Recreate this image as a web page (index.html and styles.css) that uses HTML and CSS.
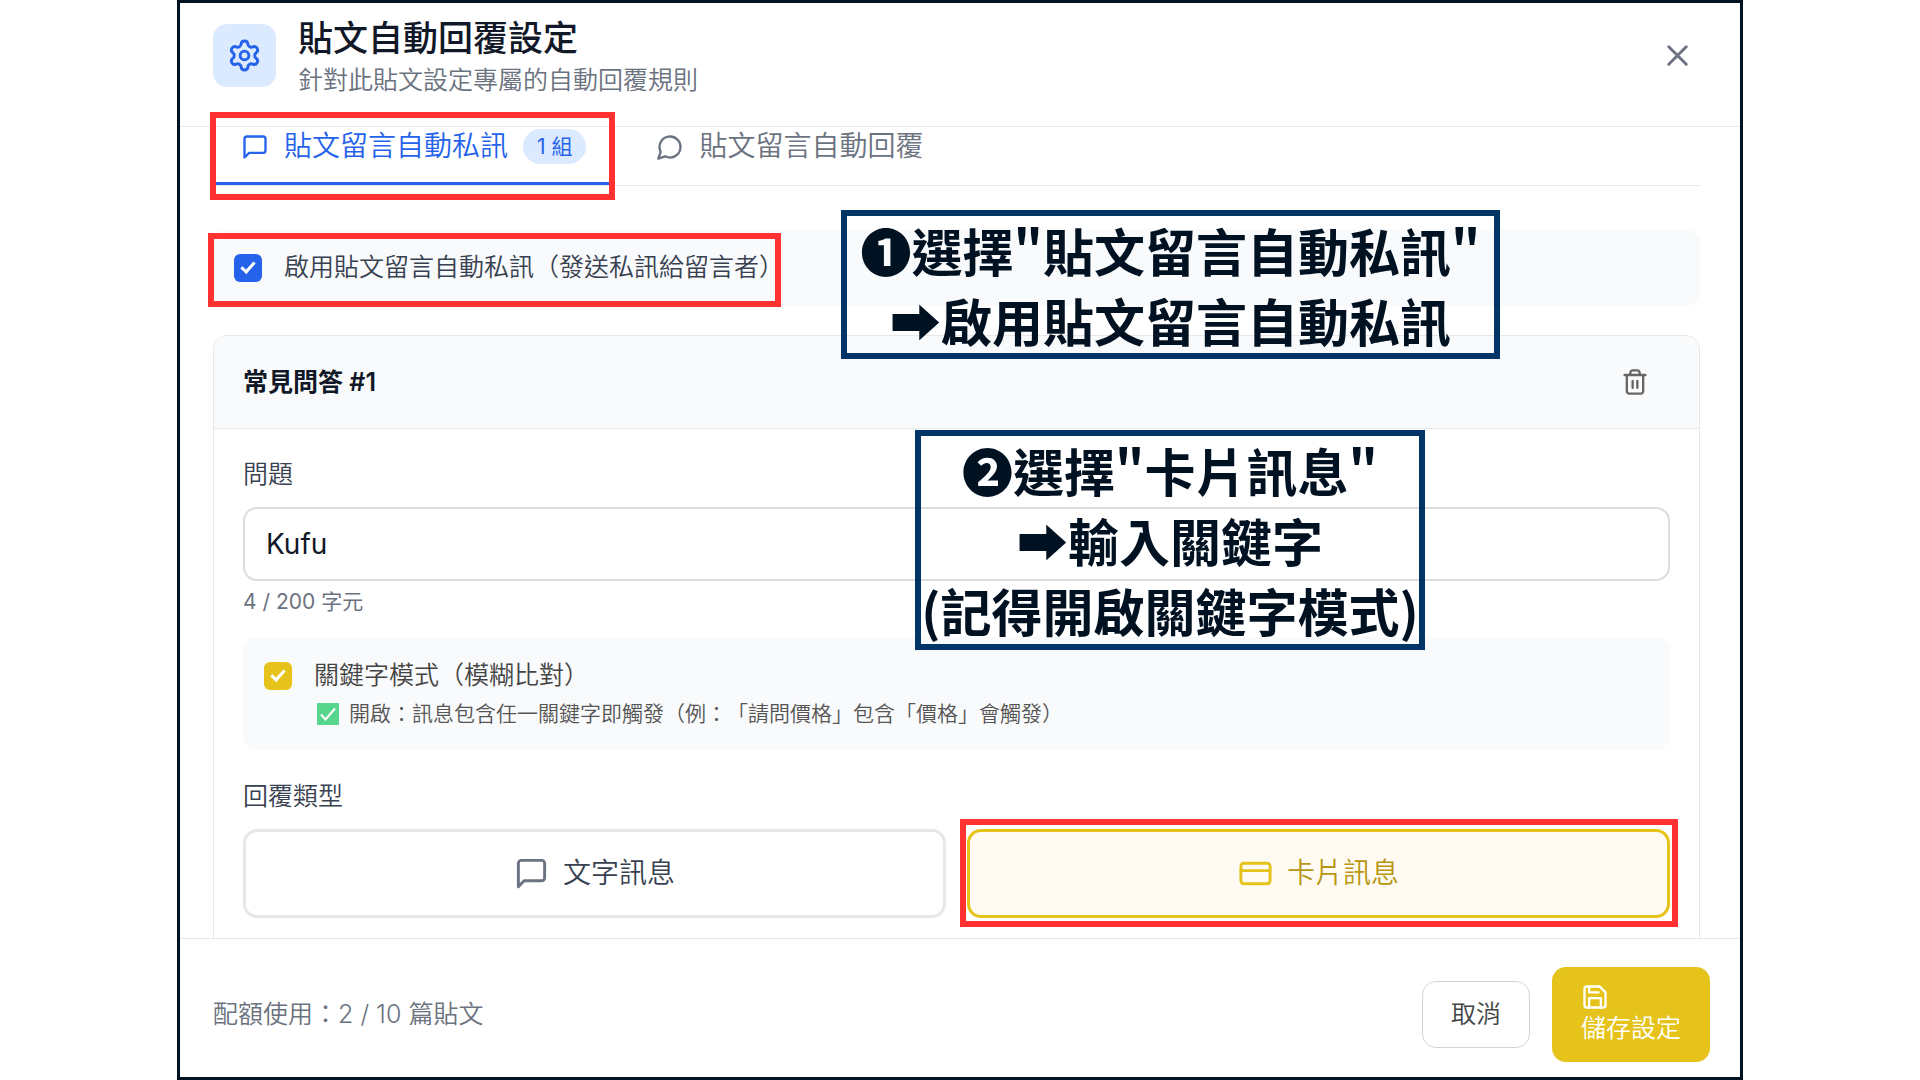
FILE: index.html
```html
<!DOCTYPE html>
<html lang="zh-TW">
<head>
  <meta charset="UTF-8" />
  <meta name="viewport" content="width=device-width, initial-scale=1.0"/>
  <title>貼文自動回覆設定</title>
  <link rel="stylesheet" href="styles.css">
</head>
<body>

  <div class="modal">

    <!-- Header -->
    <header class="modal-header">
      <div class="header-icon">
        <svg class="icon icon-lg" viewBox="0 0 24 24"><path d="M9.671 4.136a2.34 2.34 0 0 1 4.659 0 2.34 2.34 0 0 0 3.319 1.915 2.34 2.34 0 0 1 2.33 4.033 2.34 2.34 0 0 0 0 3.831 2.34 2.34 0 0 1-2.33 4.033 2.34 2.34 0 0 0-3.319 1.915 2.34 2.34 0 0 1-4.659 0 2.34 2.34 0 0 0-3.32-1.915 2.34 2.34 0 0 1-2.33-4.033 2.34 2.34 0 0 0 0-3.831A2.34 2.34 0 0 1 6.35 6.051a2.34 2.34 0 0 0 3.319-1.915"/><circle cx="12" cy="12" r="3"/></svg>
      </div>
      <div class="header-text">
        <h1>貼文自動回覆設定</h1>
        <p>針對此貼文設定專屬的自動回覆規則</p>
      </div>
      <button type="button" class="close-btn" aria-label="關閉">
        <svg class="icon icon-lg" viewBox="0 0 24 24"><path d="M18 6 6 18M6 6l12 12"/></svg>
      </button>
    </header>

    <!-- Scrollable content -->
    <main class="modal-body">
      <div class="tabs">
        <button type="button" class="tab active">
          <svg class="icon" viewBox="0 0 24 24"><path d="M21 15a2 2 0 0 1-2 2H7l-4 4V5a2 2 0 0 1 2-2h14a2 2 0 0 1 2 2z"/></svg>
          貼文留言自動私訊
          <span class="badge">1 組</span>
        </button>
        <button type="button" class="tab">
          <svg class="icon" viewBox="0 0 24 24"><path d="M7.9 20A9 9 0 1 0 4 16.1L2 22Z"/></svg>
          貼文留言自動回覆
        </button>
      </div>

      <label class="enable-row">
        <input type="checkbox" class="check blue" checked />
        啟用貼文留言自動私訊（發送私訊給留言者）
      </label>

      <section class="card">
        <div class="card-header">
          <h2>常見問答 #1</h2>
          <button type="button" class="delete-btn" aria-label="刪除">
            <svg class="icon" viewBox="0 0 24 24"><path d="M3 6h18M19 6v14c0 1-1 2-2 2H7c-1 0-2-1-2-2V6M8 6V4c0-1 1-2 2-2h4c1 0 2 1 2 2v2M10 11v6M14 11v6"/></svg>
          </button>
        </div>

        <div class="card-content">
          <label class="field-label" for="question">問題</label>
          <input type="text" id="question" class="text-input" value="Kufu" maxlength="200" />
          <p class="counter">4 / 200 字元</p>

          <div class="keyword-box">
            <input type="checkbox" id="keywordMode" class="check yellow" checked />
            <div>
              <label for="keywordMode">關鍵字模式（模糊比對）</label>
              <p class="hint">
                <svg class="hint-icon" viewBox="0 0 22 22"><rect width="22" height="22" rx="1" fill="#57d68d"/><path d="M4 11.500l4.500 5L18 5.500" fill="none" stroke="#fff" stroke-width="2"/></svg>
                開啟：訊息包含任一關鍵字即觸發（例：「請問價格」包含「價格」會觸發）
              </p>
            </div>
          </div>

          <p class="field-label">回覆類型</p>
          <div class="type-options">
            <button type="button" class="type-btn">
              <svg class="icon icon-lg" viewBox="0 0 24 24"><path d="M21 15a2 2 0 0 1-2 2H7l-4 4V5a2 2 0 0 1 2-2h14a2 2 0 0 1 2 2z"/></svg>
              文字訊息
            </button>
            <button type="button" class="type-btn selected">
              <svg class="icon icon-lg" viewBox="0 0 24 24"><rect x="2" y="5" width="20" height="14" rx="2"/><path d="M2 10h20"/></svg>
              卡片訊息
            </button>
          </div>
        </div>
      </section>
    </main>

    <!-- Footer -->
    <footer class="modal-footer">
      <p>配額使用：2 / 10 篇貼文</p>
      <button type="button" class="cancel-btn">取消</button>
      <button type="button" class="save-btn">
        <svg class="icon" viewBox="0 0 24 24"><path d="M19 21H5a2 2 0 0 1-2-2V5a2 2 0 0 1 2-2h11l5 5v11a2 2 0 0 1-2 2z"/><path d="M17 21v-8H7v8M7 3v5h8"/></svg>
        儲存設定
      </button>
    </footer>

    <!-- Tutorial notes on top of the dialog -->
    <div class="highlight highlight-tab"></div>
    <div class="highlight highlight-enable"></div>
    <div class="highlight highlight-card"></div>

    <div class="note note-one">
      <p>❶選擇"貼文留言自動私訊"</p>
      <p>➡啟用貼文留言自動私訊</p>
    </div>
    <div class="note note-two">
      <p>❷選擇"卡片訊息"</p>
      <p>➡輸入關鍵字</p>
      <p>(記得開啟關鍵字模式)</p>
    </div>
  </div>

</body>
</html>
```

FILE: styles.css
```css
* {
  margin: 0;
  padding: 0;
  box-sizing: border-box;
}

body {
  background-color: #fff;
  padding: 0 177px;
  font-family: Inter, "Noto Sans CJK TC", sans-serif;
  font-size: 25px;
  line-height: 35px;
  font-weight: 350;
  text-spacing-trim: space-all;
  color: #374151;
}

button,
input {
  font: inherit;
  color: inherit;
}

button {
  background: none;
  border: none;
  cursor: pointer;
}

.icon {
  width: 28px;
  height: 28px;
  flex-shrink: 0;
  fill: none;
  stroke: currentColor;
  stroke-width: 2;
  stroke-linecap: round;
  stroke-linejoin: round;
}

.icon-lg {
  width: 35px;
  height: 35px;
}

.modal {
  position: relative;
  display: flex;
  flex-direction: column;
  height: 100vh;
  border: 3px solid #001122;
}

/* Header */
.modal-header {
  display: flex;
  align-items: center;
  gap: 22px;
  padding: 10px 45px 28px 33px;
  border-bottom: 1px solid #e5e7eb;
}

.header-icon {
  display: flex;
  align-items: center;
  justify-content: center;
  width: 63px;
  height: 63px;
  border-radius: 14px;
  background-color: #dbeafe;
  color: #2563eb;
}

.header-text {
  flex: 1;
}

.header-text h1 {
  font-size: 35px;
  line-height: 50px;
  font-weight: 500;
  color: #111827;
}

.header-text p {
  color: #6b7280;
}

.close-btn {
  display: flex;
  color: #6b7280;
}

/* Body */
.modal-body {
  flex: 1;
  min-height: 0;
  overflow: hidden;
  padding: 0 40px 0 33px;
}

.tabs {
  display: flex;
  gap: 14px;
  border-bottom: 1px solid #e5e7eb;
}

.tab {
  display: flex;
  align-items: center;
  gap: 15px;
  padding: 2px 28px 18px;
  border-bottom: 3px solid transparent;
  font-size: 28px;
  color: #6b7280;
}

.tab.active {
  color: #2563eb;
  border-bottom-color: #2563eb;
}

.badge {
  padding: 0 14px;
  border-radius: 18px;
  background-color: #dbeafe;
  font-size: 21px;
  font-weight: 400;
}

.enable-row {
  display: flex;
  align-items: center;
  gap: 22px;
  margin: 43px 0 29px;
  padding: 21px;
  border-radius: 14px;
  background-color: #f9fafb;
}

.check {
  position: relative;
  appearance: none;
  width: 28px;
  height: 28px;
  flex-shrink: 0;
  border-radius: 6px;
}

.check.blue {
  background-color: #2563eb;
}

.check.yellow {
  background-color: #e6c31a;
}

.check::after {
  content: "";
  position: absolute;
  left: 10px;
  top: 5px;
  width: 8px;
  height: 14px;
  box-sizing: border-box;
  border: solid #fff;
  border-width: 0 3px 3px 0;
  transform: rotate(42deg);
}

.card {
  border: 1px solid #e5e7eb;
  border-radius: 14px;
  overflow: hidden;
}

.card-header {
  display: flex;
  align-items: center;
  justify-content: space-between;
  padding: 25px 29px;
  border-bottom: 1px solid #e5e7eb;
  background-color: #f9fafb;
}

.card-header h2 {
  font-size: 25px;
  line-height: 35px;
  font-weight: 600;
  color: #111827;
}

.delete-btn {
  display: flex;
  padding: 7px 21px;
  color: #666;
}

.card-content {
  padding: 28px 29px 56px;
}

.field-label {
  display: block;
  margin-bottom: 15px;
}

.text-input {
  display: block;
  width: 100%;
  padding: 18px 21px;
  border: 2px solid #d9dce1;
  border-radius: 14px;
  font-size: 28px;
  font-weight: 400;
  line-height: 34px;
  color: #111827;
}

.counter {
  margin: 7px 0 21px;
  font-size: 21px;
  line-height: 28px;
  font-weight: 400;
  color: #6b7280;
}

.keyword-box {
  display: flex;
  gap: 22px;
  margin-bottom: 29px;
  padding: 21px 21px 19px;
  border-radius: 14px;
  background-color: #f9fafb;
  color: #444;
}

.keyword-box .check {
  margin-top: 4px;
}

.hint {
  display: flex;
  align-items: center;
  gap: 10px;
  margin-top: 3px;
  font-size: 21px;
  color: #555;
}

.hint-icon {
  width: 22px;
  height: 22px;
  margin-left: 3px;
}

.type-options {
  display: grid;
  grid-template-columns: 1fr 1fr;
  gap: 21px;
}

.type-btn {
  display: flex;
  align-items: center;
  justify-content: center;
  gap: 14px;
  padding: 24px;
  border: 3px solid #e5e7eb;
  border-radius: 14px;
  font-size: 28px;
}

.type-btn .icon {
  color: #6b7280;
}

.type-btn.selected {
  border-color: #e6c31a;
  background-color: #fffbf2;
  color: #b8960f;
}

.type-btn.selected .icon {
  color: #e6c31a;
}

/* Footer */
.modal-footer {
  display: flex;
  align-items: center;
  gap: 22px;
  padding: 28px 30px 15px 33px;
  border-top: 1px solid #e5e7eb;
}

.modal-footer p {
  flex: 1;
  color: #6b7280;
}

.cancel-btn {
  padding: 15px 28px;
  border: 1px solid #d1d5db;
  border-radius: 14px;
  color: #444;
}

.save-btn {
  padding: 16px 29px;
  border-radius: 14px;
  background-color: #e6c31a;
  color: #fff;
  text-align: left;
}

.save-btn .icon {
  display: block;
}

/* Tutorial notes */
.highlight,
.note {
  position: absolute;
}

.highlight {
  border: 6px solid #ff3131;
  pointer-events: none;
}

.highlight-tab {
  left: 30px;
  top: 109px;
  width: 405px;
  height: 88px;
}

.highlight-enable {
  left: 28px;
  top: 230px;
  width: 573px;
  height: 74px;
}

.highlight-card {
  left: 780px;
  top: 816px;
  width: 718px;
  height: 108px;
}

.note {
  display: flex;
  flex-direction: column;
  align-items: center;
  justify-content: center;
  border: 6px solid #003566;
  font-family: "Noto Sans CJK TC", sans-serif;
  font-size: 51px;
  line-height: 70px;
  font-weight: 700;
  white-space: nowrap;
  color: #001122;
}

.note-one {
  left: 661px;
  top: 207px;
  width: 659px;
  height: 149px;
}

.note-two {
  left: 735px;
  top: 427px;
  width: 510px;
  height: 220px;
}
```
